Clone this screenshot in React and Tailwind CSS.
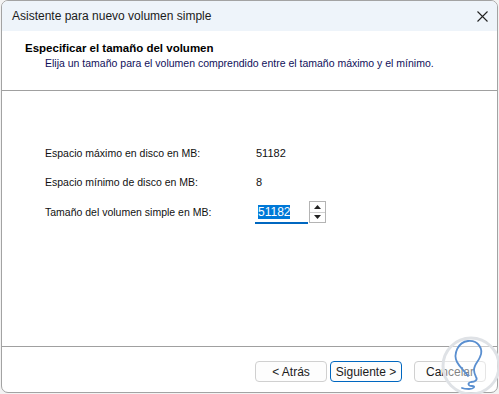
import React from "react";

const font = { fontFamily: '"Liberation Sans", Arial, sans-serif' };

function Watermark() {
  return (
    <svg
      className="absolute left-[438px] top-[334px] pointer-events-none"
      width="64"
      height="64"
      viewBox="0 0 64 64"
    >
      <circle cx="33" cy="32" r="28" fill="white" fillOpacity="0.45" stroke="#dfe2e6" strokeWidth="3" />
      <path
        d="M30 42 C27 37 22 34 19 28 C15 20 20 8 30 7 C40 6 46 15 42 23 C40 28 36 31 36 36 C36 39 37 41 38 43 C40 46 37 48 33 48 C29 49 30 52 34 52 C38 52 36 55 31 55 C28 55 26 55 24 54"
        fill="none"
        stroke="#5a8fd0"
        strokeWidth="1.8"
        strokeLinecap="round"
        strokeLinejoin="round"
      />
    </svg>
  );
}

export default function App() {
  return (
    <div className="relative w-[499px] h-[394px] bg-[#f3f3f3] overflow-hidden" style={font}>
      <div className="absolute left-[1px] top-0 w-[497px] h-[393px] border border-[#a3a3a3] rounded-[7px] overflow-hidden bg-white flex flex-col">
        <div className="h-[30px] shrink-0 bg-[#eef4fa] flex items-center justify-between pl-[10px] pr-[8px] text-[12px] text-[#1b1b1b]">
          <span>Asistente para nuevo volumen simple</span>
          <svg width="11" height="11" viewBox="0 0 11 11" className="mr-[1px]">
            <path d="M0.5 0.5 L10.5 10.5 M10.5 0.5 L0.5 10.5" stroke="#222" strokeWidth="1.1" />
          </svg>
        </div>
        <div className="h-[60px] shrink-0 border-b border-[#a0a0a0] pl-[23px] pt-[10px]">
          <div className="text-[11.5px] font-bold text-black leading-[14px]">Especificar el tamaño del volumen</div>
          <div className="text-[10.5px] text-[#10105a] leading-[14px] pl-[20px] mt-[1px]">
            Elija un tamaño para el volumen comprendido entre el tamaño máximo y el mínimo.
          </div>
        </div>
        <div className="flex-1 pl-[43px] pt-[54px] text-[10.5px] text-[#111]">
          <div className="flex items-center h-[17px]">
            <span className="w-[211px]">Espacio máximo en disco en MB:</span>
            <span className="text-[11px]">51182</span>
          </div>
          <div className="flex items-center h-[17px] mt-[12px]">
            <span className="w-[211px]">Espacio mínimo de disco en MB:</span>
            <span className="text-[11px]">8</span>
          </div>
          <div className="flex items-center mt-[10px]">
            <span className="w-[210px]">Tamaño del volumen simple en MB:</span>
            <div className="flex items-start">
              <div className="w-[53px] h-[23px] border-b-2 border-[#0067c0] flex items-center pl-[3px]">
                <span className="bg-[#0078d7] text-white text-[12px] leading-[14px]">51182</span>
              </div>
              <div className="ml-[1px] w-[17px] h-[22px] border border-[#b4b4b4] flex flex-col">
                <div className="flex-1 flex items-center justify-center border-b border-[#d0d0d0]">
                  <svg width="7" height="4" viewBox="0 0 7 4"><path d="M0 4 L3.5 0 L7 4 Z" fill="#222" /></svg>
                </div>
                <div className="flex-1 flex items-center justify-center">
                  <svg width="7" height="4" viewBox="0 0 7 4"><path d="M0 0 L3.5 4 L7 0 Z" fill="#222" /></svg>
                </div>
              </div>
            </div>
          </div>
        </div>
        <div className="h-[46px] shrink-0 border-t border-[#a0a0a0] flex items-start pt-[14px] pl-[253px] text-[12px] text-[#1b1b1b]">
          <button className="w-[72px] h-[21px] border border-[#d0d0d0] rounded-[4px] bg-[#fdfdfd] leading-none">
            &lt; Atrás
          </button>
          <button className="ml-[3px] w-[72px] h-[21px] border border-[#0067c0] rounded-[4px] bg-[#fdfdfd] leading-none">
            Siguiente &gt;
          </button>
          <button className="ml-[12px] w-[72px] h-[21px] border border-[#d0d0d0] rounded-[4px] bg-[#fdfdfd] leading-none">
            Cancelar
          </button>
        </div>
      </div>
      <Watermark />
    </div>
  );
}
